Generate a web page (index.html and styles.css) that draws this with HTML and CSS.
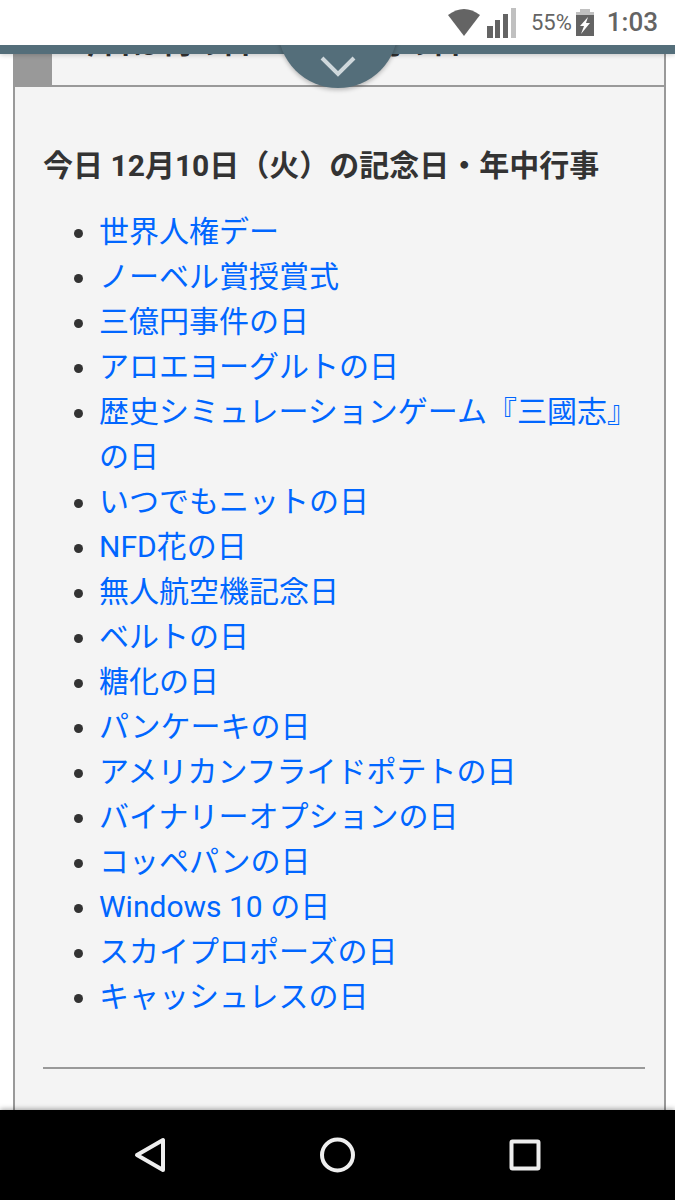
FILE: index.html
```
<!DOCTYPE html>
<html lang="ja">
<head>
<meta charset="utf-8">
<meta name="viewport" content="width=device-width, initial-scale=1">
<title>今日は何の日</title>
<link rel="stylesheet" href="styles.css">
</head>
<body>
<header class="status">
  <svg class="wifi" width="32" height="27" viewBox="0 0 32 27" aria-hidden="true"><path d="M0 6Q16-6 32 6L16 27Z"/></svg>
  <svg class="signal" width="29" height="30" viewBox="0 0 29 30" aria-hidden="true"><path d="M0 18h6v12H0zM8 12h5v18H8zM16 6h5v24h-5z"/><path class="faint" d="M24 0h5v30h-5z"/></svg>
  <span class="percent">55%</span>
  <svg class="battery" width="18" height="27" viewBox="0 0 18 27" aria-hidden="true"><path class="faint" d="M4 0h10v3h4v3H0V3h4z"/><path d="M0 6h18v21H0z"/><path class="bolt" d="M12 8 4 17h4l-3 8 9-11h-4z"/></svg>
  <time class="clock">1:03</time>
</header>
<div class="pull">
  <button class="pull-button" type="button" aria-label="メニューを開く">
    <svg width="36" height="22" viewBox="0 0 36 22" aria-hidden="true"><path d="M2 2l16 16L34 2"/></svg>
  </button>
</div>
<main class="page">
  <article class="card">
    <div class="title-bar"><h1 class="title">今日は何の日・明日は何の日</h1></div>
    <section class="content">
      <h2 class="heading">今日 12月10日（火）の記念日・年中行事</h2>
      <ul class="days">
        <li><a href="#">世界人権デー</a></li>
        <li><a href="#">ノーベル賞授賞式</a></li>
        <li><a href="#">三億円事件の日</a></li>
        <li><a href="#">アロエヨーグルトの日</a></li>
        <li><a href="#">歴史シミュレーションゲーム『三國志』の日</a></li>
        <li><a href="#">いつでもニットの日</a></li>
        <li><a href="#">NFD花の日</a></li>
        <li><a href="#">無人航空機記念日</a></li>
        <li><a href="#">ベルトの日</a></li>
        <li><a href="#">糖化の日</a></li>
        <li><a href="#">パンケーキの日</a></li>
        <li><a href="#">アメリカンフライドポテトの日</a></li>
        <li><a href="#">バイナリーオプションの日</a></li>
        <li><a href="#">コッペパンの日</a></li>
        <li><a href="#">Windows 10 の日</a></li>
        <li><a href="#">スカイプロポーズの日</a></li>
        <li><a href="#">キャッシュレスの日</a></li>
      </ul>
      <hr class="rule">
    </section>
  </article>
</main>
<nav class="navbar" aria-label="システム">
  <button type="button" aria-label="戻る"><svg width="36" height="40" viewBox="0 0 36 40" aria-hidden="true"><path d="M31 5v30L5 20z"/></svg></button>
  <button type="button" aria-label="ホーム"><svg width="36" height="40" viewBox="0 0 36 40" aria-hidden="true"><circle cx="17.5" cy="20" r="15.5"/></svg></button>
  <button type="button" aria-label="最近のアプリ"><svg width="36" height="40" viewBox="0 0 36 40" aria-hidden="true"><rect x="3.5" y="6.5" width="27" height="27" rx="1"/></svg></button>
</nav>
</body>
</html>
```
FILE: styles.css
```
* { box-sizing: border-box; }
body {
  margin: 0;
  height: 100vh;
  display: flex;
  flex-direction: column;
  overflow: hidden;
  background: #fff;
  color: #333;
  font: 30px/45px Roboto, "Noto Sans CJK JP", sans-serif;
}
.status {
  flex: none;
  position: relative;
  z-index: 2;
  height: 45px;
  display: flex;
  justify-content: flex-end;
  align-items: center;
  padding-right: 17px;
  background: #fff;
  color: #646464;
}
.status svg { fill: #646464; }
.status .faint { fill: #c0c0c0; }
.status .bolt { fill: #fff; }
.signal { margin-left: 7px; }
.percent { margin-left: 15px; font-size: 22px; }
.battery { margin-left: 4px; }
.clock { margin-left: 13px; font-size: 26px; font-weight: 500; }
.pull {
  flex: none;
  position: relative;
  z-index: 1;
  height: 9px;
  background: #546e7a;
  box-shadow: 0 1px 5px rgba(0, 0, 0, .2);
}
.pull-button {
  position: absolute;
  bottom: -34px;
  left: 50%;
  width: 120px;
  height: 120px;
  margin-left: -60px;
  padding: 0 0 10px;
  display: flex;
  justify-content: center;
  align-items: flex-end;
  border: 0;
  border-radius: 50%;
  background: #546e7a;
  box-shadow: 0 2px 4px rgba(0, 0, 0, .25);
}
.pull-button svg { fill: none; stroke: #cfd8dc; stroke-width: 4; }
.page {
  flex: 1;
  min-height: 0;
  overflow: hidden;
  padding: 0 9px 0 13px;
  display: flex;
}
.card {
  flex: 1;
  border: solid #999;
  border-width: 0 2px;
  background: #f4f4f4;
}
.title-bar {
  height: 33px;
  display: flex;
  align-items: flex-end;
  padding: 0 0 20px 20px;
  border-left: 37px solid #999;
  border-bottom: 2px solid #999;
}
.title { margin: 0; font-size: 30px; line-height: 45px; white-space: nowrap; }
.content { padding: 56px 19px 0 28px; }
.heading { margin: 0; font-size: 30px; line-height: 45px; }
.days { margin: 21px 0 0; padding: 0 0 0 56px; }
.days a { color: #0066ff; text-decoration: none; }
.rule { margin: 48px 0 0; border: 0; border-top: 2px solid #999; }
.navbar {
  flex: none;
  position: relative;
  height: 90px;
  display: flex;
  justify-content: center;
  gap: 80px;
  background: #000;
  box-shadow: 0 -1px 5px rgba(0, 0, 0, .35);
}
.navbar button {
  width: 108px;
  padding: 0;
  border: 0;
  background: none;
}
.navbar svg { display: block; margin: 0 auto; fill: none; stroke: #eee; stroke-width: 4; stroke-linejoin: round; }
```
